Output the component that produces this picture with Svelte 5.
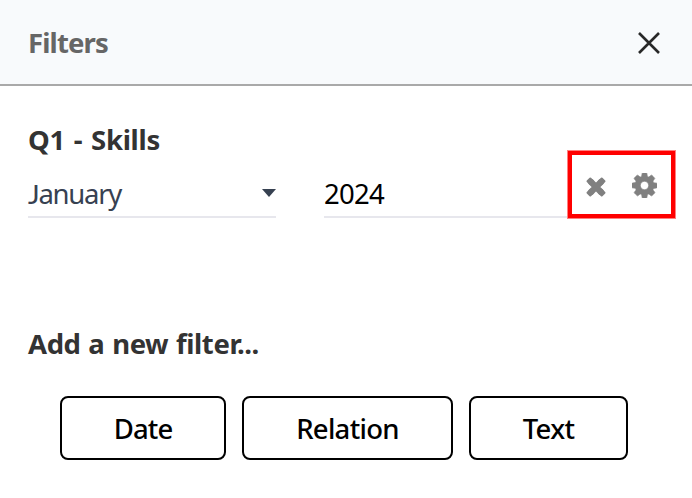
<script>
  const filterTypes = [
    { label: 'Date', cls: 'date' },
    { label: 'Relation', cls: 'relation' },
    { label: 'Text', cls: 'text' },
  ];
</script>

<main class="panel">
  <header>
    <h1><span class="t-filters">Filters</span></h1>
    <button class="close" aria-label="Close">
      <svg width="22" height="22" viewBox="0 0 22 22"><path d="M1 1 21 21M21 1 1 21" fill="none" stroke="#282828" stroke-width="2.6" /></svg>
    </button>
  </header>

  <section class="current">
    <h2><span class="t-skills">Q1 - Skills</span></h2>
    <div class="row">
      <div class="field month">
        <span class="t-month">January</span>
        <svg width="14" height="8" viewBox="0 0 14 8"><path d="M0 0h14L7 8z" fill="#374151" /></svg>
      </div>
      <div class="field year"><span class="t-year">2024</span></div>
      <div class="actions">
        <svg class="remove" width="20" height="20" viewBox="0 0 20 20"><path d="M4.300 4.300 15.700 15.700M15.700 4.300 4.300 15.700" stroke="#808080" stroke-width="6.200" /><path d="M4.300 1.500 1.500 4.300 4.300 7.100 7.100 4.300zM15.700 1.500 18.500 4.300 15.700 7.100 12.900 4.300zM4.300 12.900 1.500 15.700 4.300 18.500 7.100 15.700zM15.700 12.900 18.500 15.700 15.700 18.500 12.900 15.700z" fill="#808080" stroke="#808080" stroke-width="2" stroke-linejoin="round" /></svg>
        <svg class="gear" width="25" height="25" viewBox="0 0 1536 1536"><path fill="#808080" stroke="#808080" stroke-width="40" d="M1024 768q0-106-75-181t-181-75-181 75-75 181 75 181 181 75 181-75 75-181zm512-109v222q0 12-8 23t-20 13l-185 28q-19 54-39 91 35 50 107 138 10 12 10 25t-9 23q-27 37-99 108t-94 71q-12 0-26-9l-138-108q-44 23-91 38-16 136-29 186-7 28-36 28H657q-14 0-24.500-8.500T621 1506l-28-184q-49-16-90-37l-141 107q-10 9-25 9-14 0-25-11-126-114-165-168-7-10-7-23 0-12 8-23 15-21 51-66.500t54-70.500q-27-50-41-99L29 913q-13-2-21-12.500T0 877V655q0-12 8-23t19-13l186-28q14-46 39-92-40-57-107-138-10-12-10-24 0-10 9-23 26-36 98.500-107.500T337 135q13 0 26 10l138 107q44-23 91-38 16-136 29-186 7-28 36-28h222q14 0 24.500 8.500T915 30l28 184q49 16 90 37l142-107q9-9 24-9 13 0 25 10 129 119 165 170 7 8 7 22 0 12-8 23-15 21-51 66.500t-54 70.500q26 50 41 98l183 28q13 2 21 12.500t8 23.500z" /></svg>
      </div>
    </div>
  </section>

  <section class="add">
    <h2><span class="t-add">Add a new filter...</span></h2>
    <div class="buttons">
      {#each filterTypes as type}
        <button class="type {type.cls}"><span>{type.label}</span></button>
      {/each}
    </div>
  </section>
</main>

<style>
  :global(body) { margin: 0; background: #fff; }
  .panel { width: 692px; height: 498px; overflow: hidden; background: #fff; font-family: 'Noto Sans', 'Open Sans', sans-serif; font-size: 27.5px; line-height: 38px; }
  h1, h2 { margin: 0; font-size: 27.5px; font-weight: 700; line-height: 38px; white-space: nowrap; color: #333; }
  span { display: inline-block; white-space: nowrap; }
  header { box-sizing: border-box; height: 86px; padding: 2px 32px 0 28px; display: flex; align-items: center; justify-content: space-between; background: #f8fafc; border-bottom: 2px solid #a9a9a9; }
  h1 { color: #666; }
  .t-filters { letter-spacing: -.85px; }
  .t-skills { letter-spacing: -.3px; word-spacing: 2px; }
  .t-add { letter-spacing: -.4px; word-spacing: 1px; }
  .t-month { letter-spacing: -1.25px; }
  .t-month::first-letter { font-family: Lato, sans-serif; }
  .t-year { letter-spacing: -.7px; }
  button { font-family: inherit; padding: 0; cursor: pointer; }
  .close { display: flex; border: 0; background: none; }
  .current { padding: 35px 16px 0 28px; }
  .row { display: flex; height: 69px; margin-top: -9px; }
  .field { box-sizing: border-box; height: 68px; border-bottom: 2px solid #e7e7ed; display: flex; align-items: center; padding-top: 21px; }
  .month { width: 248px; margin-right: 48px; justify-content: space-between; color: #374151; }
  .month svg { margin-top: -1px; }
  .year { width: 243px; color: #000; }
  .actions { box-sizing: border-box; width: 109px; height: 69px; border: 5px solid #f00; outline: 1px solid #ff8080; outline-offset: -1px; display: flex; padding: 22px 0 0 14px; gap: 25px; }
  .remove { margin-right: 1px; }
  .gear { margin-top: -4px; }
  .add { padding: 106px 28px 0; }
  .buttons { display: flex; gap: 16px; padding: 33px 0 0 32px; }
  .type { box-sizing: border-box; height: 64px; border: 2px solid #000; border-radius: 8px; background: #fff; color: #000; font-size: 27.5px; font-weight: 500; line-height: 38px; letter-spacing: -.7px; display: flex; align-items: center; justify-content: center; padding-top: 2px; }
  .date { width: 166px; }
  .date span { letter-spacing: -.9px; }
  .relation { width: 211px; }
  .text { width: 159px; }
</style>
